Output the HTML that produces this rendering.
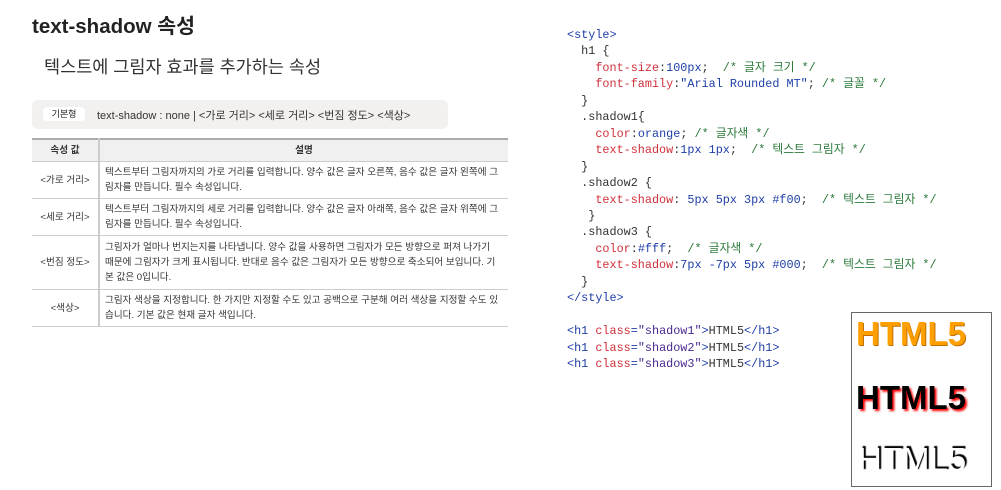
<!DOCTYPE html>
<html><head><meta charset="utf-8"><style>
body{margin:0;width:1001px;height:490px;background:#fff;position:relative;overflow:hidden;font-family:"Liberation Sans","Noto Sans CJK KR",sans-serif;color:#222}
.a{position:absolute;white-space:nowrap}
.code{position:absolute;left:567px;top:27px;font-family:"Liberation Mono","Noto Sans CJK KR",monospace;font-size:11.8px;line-height:16.45px;white-space:pre;color:#333}
.r{color:#d0303a}.b{color:#1f3fa8}.g{color:#2a7a3a}.p{color:#4a2a90}
table{position:absolute;left:32px;top:138px;width:476px;border-collapse:collapse;font-size:9.6px;color:#333}
td,th{border-bottom:1.5px solid #ccc;padding:3px 5px;line-height:15px;vertical-align:middle;white-space:nowrap}
th{background:#f0f0f0;font-weight:bold;height:15px;border-top:2px solid #aaa}
td:first-child,th:first-child{width:56px;text-align:center;border-right:2px solid #ccc}
</style></head><body>
<div class="a" style="left:32px;top:9px;font-size:20.5px;font-weight:bold;color:#222">text-shadow 속성</div>
<div class="a" style="left:44px;top:54px;font-size:17.5px;color:#333">텍스트에 그림자 효과를 추가하는 속성</div>
<div class="a" style="left:32px;top:100px;width:416px;height:29px;background:#f3f1ef;border-radius:6px"></div>
<div class="a" style="left:43px;top:107px;width:42px;height:14px;background:#fff;border-radius:4px;font-size:9px;text-align:center;line-height:14px">기본형</div>
<div class="a" style="left:97px;top:107px;font-size:11px;color:#333">text-shadow : none | &lt;가로 거리&gt; &lt;세로 거리&gt; &lt;번짐 정도&gt; &lt;색상&gt;</div>
<table>
<tr><th>속성 값</th><th>설명</th></tr>
<tr><td style="height:29px">&lt;가로 거리&gt;</td><td>텍스트부터 그림자까지의 가로 거리를 입력합니다. 양수 값은 글자 오른쪽, 음수 값은 글자 왼쪽에 그<br>림자를 만듭니다. 필수 속성입니다.</td></tr>
<tr><td style="height:29px">&lt;세로 거리&gt;</td><td>텍스트부터 그림자까지의 세로 거리를 입력합니다. 양수 값은 글자 아래쪽, 음수 값은 글자 위쪽에 그<br>림자를 만듭니다. 필수 속성입니다.</td></tr>
<tr><td style="height:47px">&lt;번짐 정도&gt;</td><td>그림자가 얼마나 번지는지를 나타냅니다. 양수 값을 사용하면 그림자가 모든 방향으로 퍼져 나가기<br>때문에 그림자가 크게 표시됩니다. 반대로 음수 값은 그림자가 모든 방향으로 축소되어 보입니다. 기<br>본 값은 0입니다.</td></tr>
<tr><td style="height:29px">&lt;색상&gt;</td><td>그림자 색상을 지정합니다. 한 가지만 지정할 수도 있고 공백으로 구분해 여러 색상을 지정할 수도 있<br>습니다. 기본 값은 현재 글자 색입니다.</td></tr>
</table>
<div class="code"><span class="b">&lt;style&gt;</span>
  h1 {
    <span class="r">font-size</span>:<span class="b">100px</span>;  <span class="g">/* 글자 크기 */</span>
    <span class="r">font-family</span>:<span class="b">"Arial Rounded MT"</span>; <span class="g">/* 글꼴 */</span>
  }
  .shadow1{
    <span class="r">color</span>:<span class="b">orange</span>; <span class="g">/* 글자색 */</span>
    <span class="r">text-shadow</span>:<span class="b">1px 1px</span>;  <span class="g">/* 텍스트 그림자 */</span>
  }
  .shadow2 {
    <span class="r">text-shadow</span>: <span class="b">5px 5px 3px #f00</span>;  <span class="g">/* 텍스트 그림자 */</span>
   }
  .shadow3 {
    <span class="r">color</span>:<span class="b">#fff</span>;  <span class="g">/* 글자색 */</span>
    <span class="r">text-shadow</span>:<span class="b">7px -7px 5px #000</span>;  <span class="g">/* 텍스트 그림자 */</span>
  }
<span class="b">&lt;/style&gt;</span>

<span class="b">&lt;h1 <span class="r">class</span>=<span class="p">"shadow1"</span>&gt;</span>HTML5<span class="b">&lt;/h1&gt;</span>
<span class="b">&lt;h1 <span class="r">class</span>=<span class="p">"shadow2"</span>&gt;</span>HTML5<span class="b">&lt;/h1&gt;</span>
<span class="b">&lt;h1 <span class="r">class</span>=<span class="p">"shadow3"</span>&gt;</span>HTML5<span class="b">&lt;/h1&gt;</span></div>
<div class="a" style="left:851px;top:312px;width:139px;height:173px;border:1.5px solid #666;background:#fff"></div>
<div class="a" style="left:856px;top:315px;font-size:33px;font-weight:bold;color:#ffa000;text-shadow:1px 1px #c07000">HTML5</div>
<div class="a" style="left:856px;top:379px;font-size:33px;font-weight:bold;color:#000;text-shadow:2px 2px 2px #f00">HTML5</div>
<div class="a" style="left:858px;top:441px;font-size:33px;color:#fff;text-shadow:2px -2px 1px #000">HTML5</div>
</body></html>
